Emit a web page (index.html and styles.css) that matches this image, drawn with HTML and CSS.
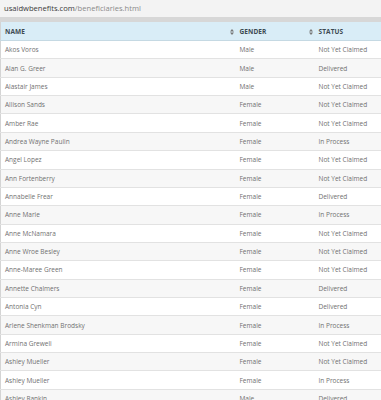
FILE: index.html
```html
<!DOCTYPE html>
<html>
<head>
<meta charset="utf-8">
<link rel="stylesheet" href="styles.css">
</head>
<body>
<div class="urlbar"><span class="host">usaidwbenefits.com</span><span class="path">/beneficiaries.html</span></div>
<div class="band"></div>
<table class="grid">
<colgroup><col class="c1"><col class="c2"><col class="c3"></colgroup>
<thead>
<tr>
<th><span class="lbl">NAME</span><svg class="sort" width="4" height="6" viewBox="0 0 4 6"><path d="M0 2.5L2 0L4 2.5Z M0 3.5L2 6L4 3.5Z" fill="#777"/></svg></th>
<th><span class="lbl">GENDER</span><svg class="sort" width="4" height="6" viewBox="0 0 4 6"><path d="M0 2.5L2 0L4 2.5Z M0 3.5L2 6L4 3.5Z" fill="#777"/></svg></th>
<th><span class="lbl">STATUS</span></th>
</tr>
</thead>
<tbody>
<tr><td>Akos Voros</td><td>Male</td><td>Not Yet Claimed</td></tr>
<tr><td>Alan G. Greer</td><td>Male</td><td>Delivered</td></tr>
<tr><td>Alastair James</td><td>Male</td><td>Not Yet Claimed</td></tr>
<tr><td>Allison Sands</td><td>Female</td><td>Not Yet Claimed</td></tr>
<tr><td>Amber Rae</td><td>Female</td><td>Not Yet Claimed</td></tr>
<tr><td>Andrea Wayne Paulin</td><td>Female</td><td>In Process</td></tr>
<tr><td>Angel Lopez</td><td>Female</td><td>Not Yet Claimed</td></tr>
<tr><td>Ann Fortenberry</td><td>Female</td><td>Not Yet Claimed</td></tr>
<tr><td>Annabelle Frear</td><td>Female</td><td>Delivered</td></tr>
<tr><td>Anne Marie</td><td>Female</td><td>In Process</td></tr>
<tr><td>Anne McNamara</td><td>Female</td><td>Not Yet Claimed</td></tr>
<tr><td>Anne Wroe Besley</td><td>Female</td><td>Not Yet Claimed</td></tr>
<tr><td>Anne-Maree Green</td><td>Female</td><td>Not Yet Claimed</td></tr>
<tr><td>Annette Chalmers</td><td>Female</td><td>Delivered</td></tr>
<tr><td>Antonia Cyn</td><td>Female</td><td>Delivered</td></tr>
<tr><td>Arlene Shenkman Brodsky</td><td>Female</td><td>In Process</td></tr>
<tr><td>Armina Greweli</td><td>Female</td><td>Not Yet Claimed</td></tr>
<tr><td>Ashley Mueller</td><td>Female</td><td>Not Yet Claimed</td></tr>
<tr><td>Ashley Mueller</td><td>Female</td><td>In Process</td></tr>
<tr><td>Ashley Rankin</td><td>Male</td><td>Delivered</td></tr>
</tbody>
</table>
</body>
</html>
```
FILE: styles.css
```css
html, body {
  margin: 0;
  padding: 0;
  background: #ffffff;
  overflow: hidden;
  font-family: "Open Sans", "Liberation Sans", sans-serif;
}
.urlbar {
  height: 17px;
  background: #f3f3f3;
  padding-left: 4px;
  font-size: 7.6px;
  line-height: 16px;
}
.host { color: #3a3a3a; }
.path { color: #8a8a8a; }
.band {
  height: 5px;
  background: #d7d7d7;
}
.grid {
  border-collapse: collapse;
  table-layout: fixed;
  width: 381px;
  border-left: 1px solid #d4d4d4;
}
.c1 { width: 235px; }
.c2 { width: 79px; }
.c3 { width: 67px; }
.grid th {
  background: #d9edf7;
  height: 18.5px;
  padding: 0 3px 0 4px;
  text-align: left;
  font-size: 6.5px;
  font-weight: 700;
  color: #3d4a52;
  letter-spacing: 0.1px;
  border-bottom: 1px solid #c5d9e3;
  box-sizing: border-box;
  position: relative;
  vertical-align: middle;
}
.sort {
  position: absolute;
  right: 2px;
  top: 7px;
}
.grid td {
  height: 18.37px;
  padding: 0 4px;
  font-size: 6.5px;
  color: #707070;
  border-bottom: 1px solid #e2e2e2;
  box-sizing: border-box;
  vertical-align: middle;
  white-space: nowrap;
}
.grid tbody tr:nth-child(even) td {
  background: #f7f7f7;
}
```
